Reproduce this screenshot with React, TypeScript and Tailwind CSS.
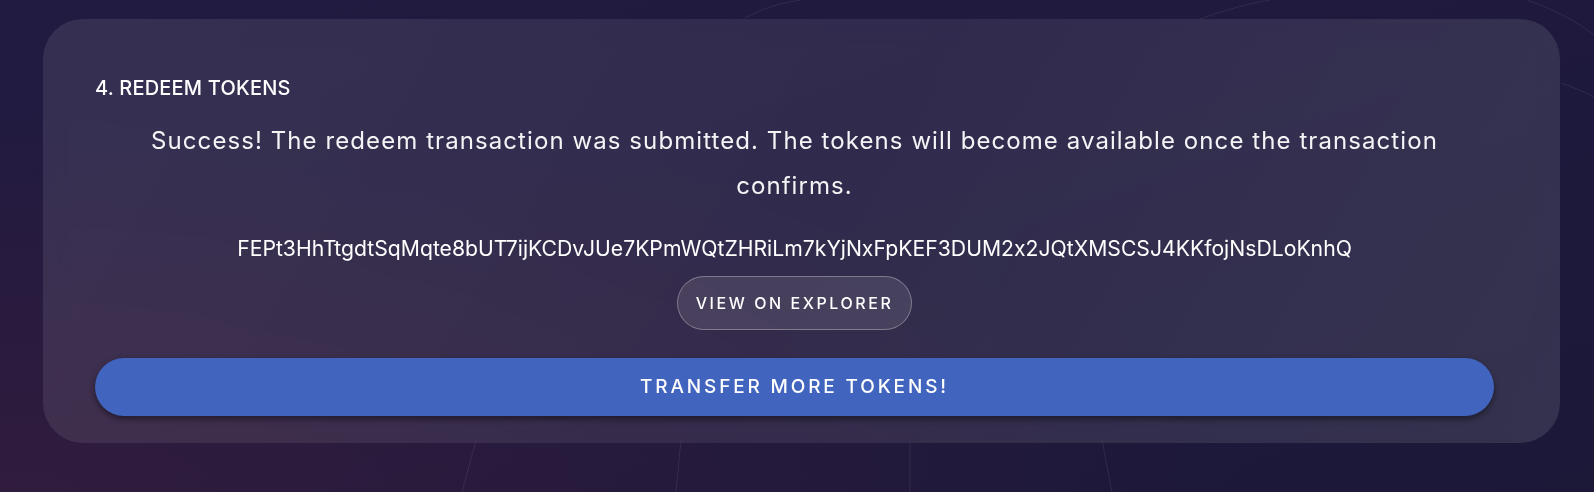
import { useState } from "react";

const HASH = "FEPt3HhTtgdtSqMqte8bUT7ijKCDvJUe7KPmWQtZHRiLm7kYjNxFpKEF3DUM2x2JQtXMSCSJ4KKfojNsDLoKnhQ";

// faint globe lines behind the card
const Backdrop = () => (
  <svg className="absolute inset-0 h-full w-full" viewBox="0 0 1594 492" preserveAspectRatio="none" fill="none">
    <g stroke="white" strokeOpacity="0.08" strokeWidth="1">
      <path d="M476 440 L462 492" />
      <path d="M681 440 L676 492" />
      <path d="M910 440 L910 492" />
      <path d="M1102 440 L1112 492" />
      <path d="M745 18 C760 10 775 4 800 0" />
      <path d="M1200 19 C1225 10 1250 3 1270 0" />
      <path d="M1527 0 C1555 10 1578 22 1594 35" />
      <path d="M1561 83 C1575 88 1585 92 1594 97" />
    </g>
  </svg>
);

export default function App() {
  const [done] = useState(true);

  return (
    <div className="relative h-[492px] w-full overflow-hidden bg-[linear-gradient(160deg,#221b41_0%,#1f1a3e_45%,#1b1838_100%)] font-['Inter',sans-serif] text-white">
      <div className="absolute inset-0 bg-[radial-gradient(ellipse_at_0%_100%,rgba(70,30,60,0.45),transparent_55%)]" />
      <Backdrop />
      <div className="relative pt-[19px] pl-[43px]">
        <div className="w-[1517px] h-[424px] rounded-[40px] bg-white/[0.08] bg-[linear-gradient(120deg,rgba(255,255,255,0.02),rgba(255,255,255,0)_50%,rgba(255,255,255,0.04))] backdrop-blur-md pl-[52px] pr-[66px] pt-[55px]">
          <h2 className="text-[20px] leading-[28px] font-medium tracking-[0.01em]">4. REDEEM TOKENS</h2>
          {done && (
            <div className="flex flex-col items-center">
              <p className="mt-[16px] text-center text-[24px] leading-[45px] tracking-[0.045em] text-white/95">
                Success! The redeem transaction was submitted. The tokens will become available once the transaction
                <br />
                confirms.
              </p>
              <div className="mt-[26px] text-[21.2px] leading-[28px] [font-feature-settings:'calt'_0]">{HASH}</div>
              <button className="mt-[14px] h-[54px] w-[235px] rounded-full border border-white/30 bg-white/10 text-[16px] font-medium tracking-[0.16em]">
                VIEW ON EXPLORER
              </button>
              <button className="mt-[28px] h-[58px] w-full rounded-full bg-[#4164be] text-[19px] font-medium tracking-[0.15em] shadow-[0_3px_6px_rgba(0,0,0,0.45)]">
                TRANSFER MORE TOKENS!
              </button>
            </div>
          )}
        </div>
      </div>
    </div>
  );
}
